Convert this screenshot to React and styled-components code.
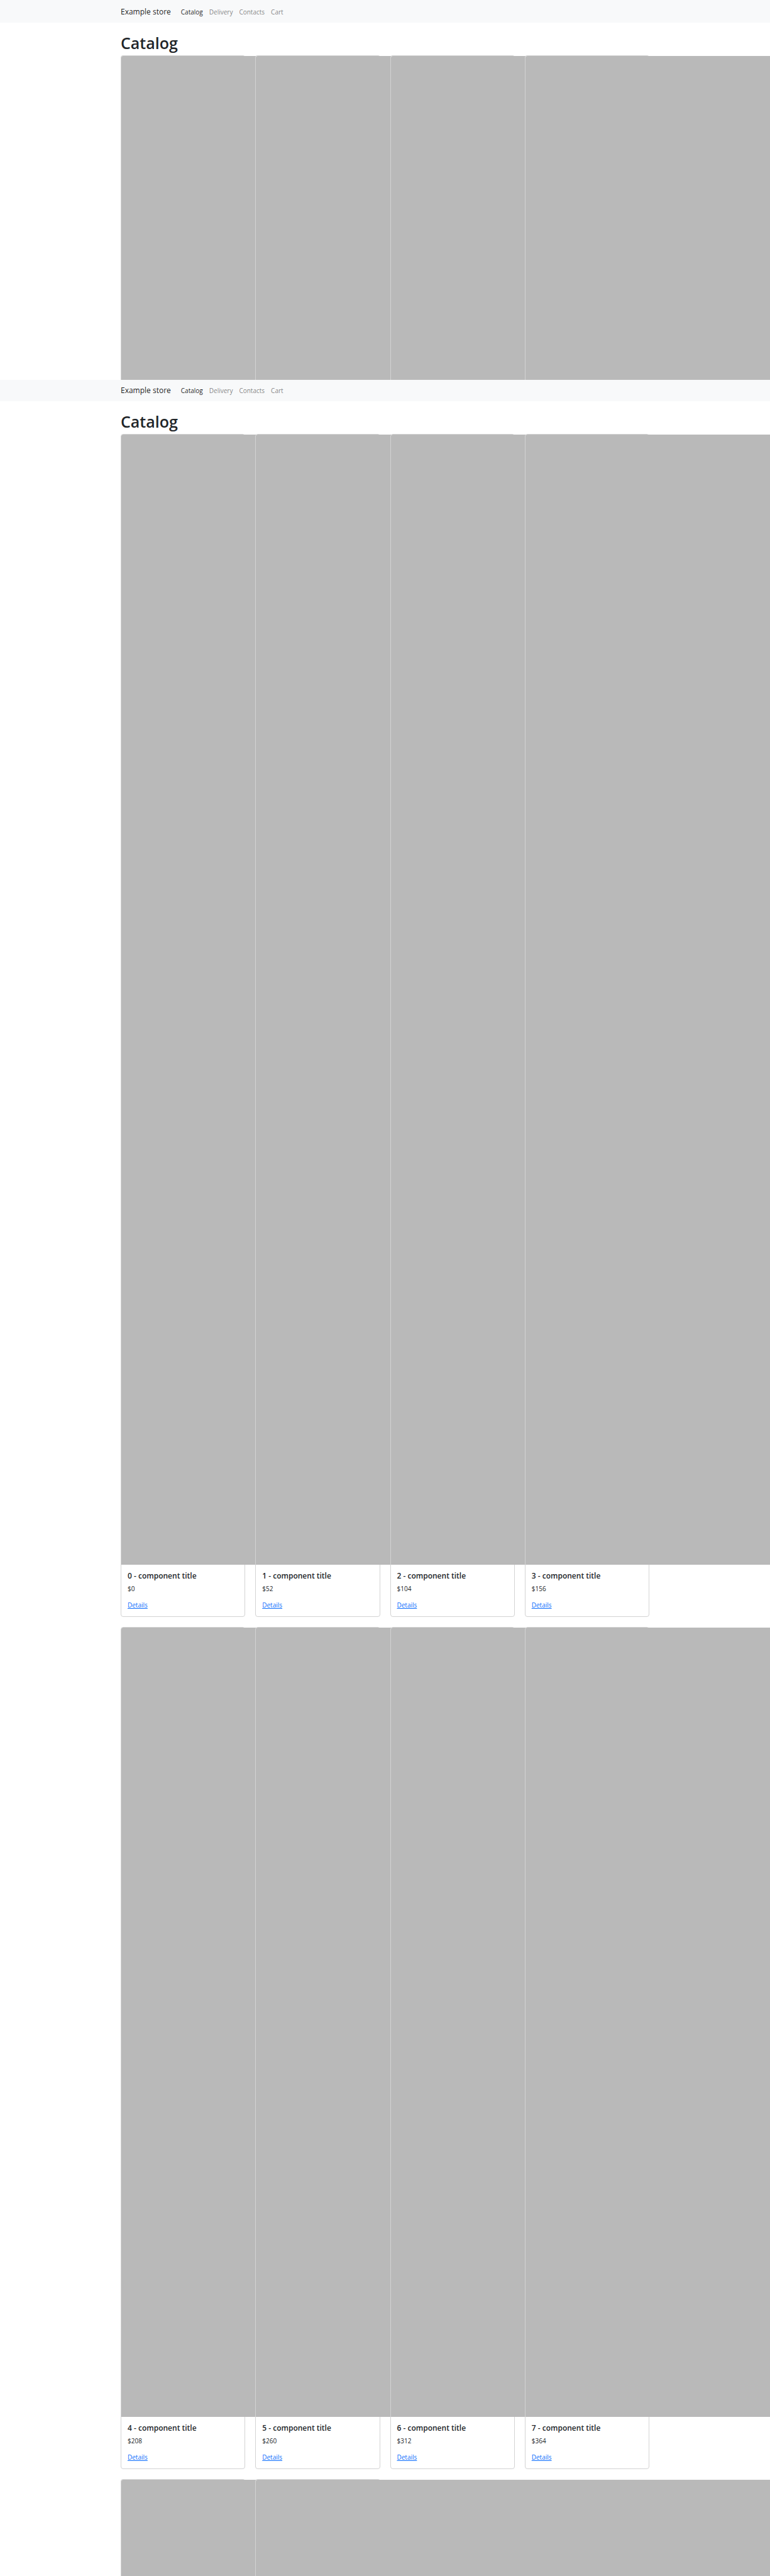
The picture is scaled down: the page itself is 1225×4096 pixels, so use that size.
import React from "react";
import styled, { createGlobalStyle } from "styled-components";

const GlobalStyle = createGlobalStyle`
  *, *::before, *::after { box-sizing: border-box; }
  body {
    margin: 0;
    background: #fff;
    color: #212529;
    font-family: "Open Sans", "Noto Sans", sans-serif;
    font-size: 10px;
    line-height: 16px;
    overflow-x: hidden;
  }
`;

const Page = styled.div`
  overflow: hidden;
`;

const Container = styled.div`
  width: 100%;
  max-width: 857px;
  margin: 0 auto;
  padding: 0 8px;
`;

const Navbar = styled.header`
  background: #f8f9fa;
  padding: ${(p) => (p.$compact ? "5px 0" : "7px 0 5px")};
`;

const NavRow = styled(Container)`
  display: flex;
  align-items: center;
`;

const Brand = styled.a`
  margin-right: 16px;
  color: rgba(0, 0, 0, 0.9);
  font-size: 12px;
  line-height: 24px;
  text-decoration: none;
`;

const NavLinks = styled.nav`
  display: flex;
  gap: 10px;
`;

const NavLink = styled.a`
  color: ${(p) => (p.$active ? "rgba(0, 0, 0, 0.9)" : "rgba(0, 0, 0, 0.5)")};
  text-decoration: none;
`;

const Title = styled.h1`
  margin: 0;
  padding: 16px 0 4px;
  font-size: 25px;
  line-height: 32px;
  font-weight: 600;
`;

const Shelf = styled.div`
  display: grid;
  grid-template-columns: repeat(4, minmax(0, 1fr));
  gap: 16px;

  & + & {
    margin-top: 16px;
  }
`;

const CardFrame = styled.article`
  min-width: 0;
  background: #fff;
  border: 1px solid #d3d3d3;
  border-radius: 4px;
  ${(p) => p.$open && "border-bottom: 0; border-radius: 4px 4px 0 0;"}
`;

const Picture = styled.div`
  width: 100vw;
  height: ${(p) => p.$height}px;
  border-top-left-radius: 3px;
  background: #b9b9b9;
`;

const CardBody = styled.div`
  padding: 10px;
`;

const CardTitle = styled.h2`
  margin: 0 0 4px;
  font-size: 12px;
  line-height: 16px;
  font-weight: 600;
`;

const Price = styled.p`
  margin: 0 0 10px;
`;

const Details = styled.a`
  display: block;
  width: fit-content;
  color: #0d6efd;
  text-decoration: underline;
`;

const LINKS = ["Catalog", "Delivery", "Contacts", "Cart"];

function Header({ compact }) {
  return (
    <Navbar $compact={compact}>
      <NavRow>
        <Brand href="#">Example store</Brand>
        <NavLinks>
          {LINKS.map((name, i) => (
            <NavLink key={name} href="#" $active={i === 0}>
              {name}
            </NavLink>
          ))}
        </NavLinks>
      </NavRow>
    </Navbar>
  );
}

function Card({ id, height, open }) {
  return (
    <CardFrame $open={open}>
      <Picture role="img" $height={height} />
      {!open && (
        <CardBody>
          <CardTitle>{id} - component title</CardTitle>
          <Price>${id * 52}</Price>
          <Details href="#">Details</Details>
        </CardBody>
      )}
    </CardFrame>
  );
}

function Row({ ids, height, open }) {
  return (
    <Shelf>
      {ids.map((id) => (
        <Card key={id} id={id} height={height} open={open} />
      ))}
    </Shelf>
  );
}

export default function App() {
  return (
    <Page>
      <GlobalStyle />
      <Header />
      <Container>
        <Title>Catalog</Title>
        <Row ids={[0, 1, 2, 3]} height={515} open />
      </Container>
      <Header compact />
      <Container>
        <Title>Catalog</Title>
        <Row ids={[0, 1, 2, 3]} height={1797} />
        <Row ids={[4, 5, 6, 7]} height={1255} />
        <Row ids={[8, 9]} height={153} open />
      </Container>
    </Page>
  );
}
